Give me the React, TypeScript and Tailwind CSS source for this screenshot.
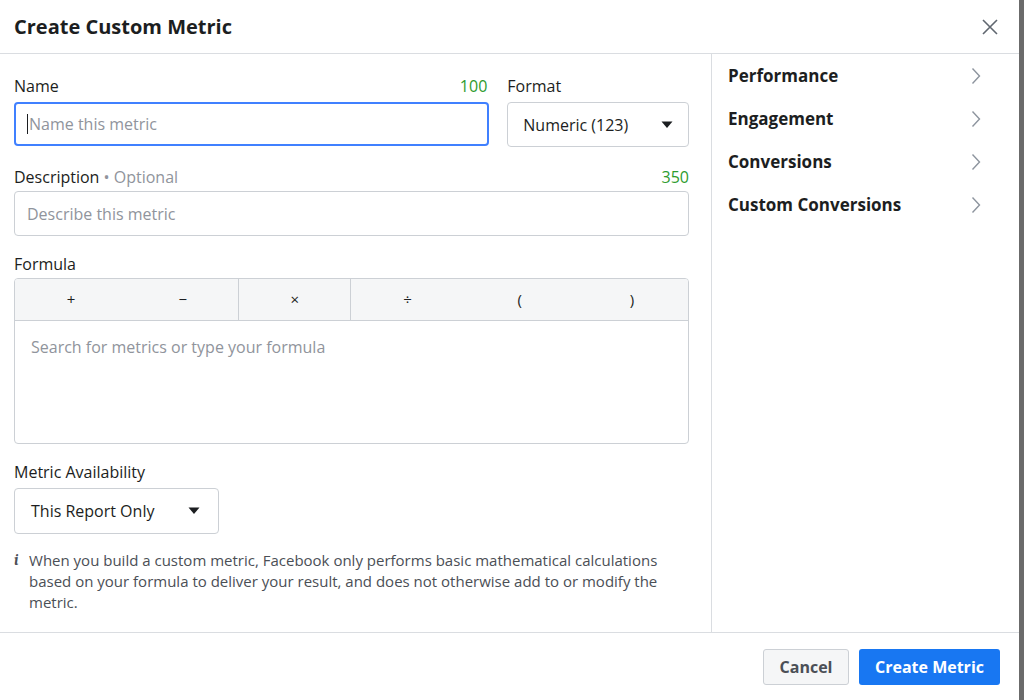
const F = { fontFamily: "'Open Sans', 'Liberation Sans', Arial, sans-serif" };

function Chevron() {
  return (
    <svg width="10" height="18" viewBox="0 0 10 18" fill="none" stroke="#8d949e" strokeWidth="1.4">
      <path d="M1.5 1.5 L8.5 9 L1.5 16.5" />
    </svg>
  );
}

function Caret() {
  return (
    <svg width="12" height="8" viewBox="0 0 12 8">
      <path d="M0.5 0.5 H11.5 L6 7 Z" fill="#1c1e21" />
    </svg>
  );
}

export default function App() {
  const ops = ["+", "−", "×", "÷", "(", ")"];
  return (
    <div className="w-[1024px] h-[700px] bg-[#6b6b6b] flex" style={F}>
      <div className="w-[1019px] h-[700px] bg-white flex flex-col text-[#1c1e21]">
        <div className="h-[54px] border-b border-[#dadde1] flex items-center justify-between pl-[14px] pr-[20px] shrink-0">
          <h1 className="text-[20px] font-bold">Create Custom Metric</h1>
          <svg width="18" height="18" viewBox="0 0 18 18" stroke="#606770" strokeWidth="1.6">
            <path d="M2 2 L16 16 M16 2 L2 16" />
          </svg>
        </div>
        <div className="flex flex-1 min-h-0">
          <div className="w-[712px] border-r border-[#dadde1] pl-[14px] pr-[22px] pt-[20px] text-[16px]">
            <div className="flex gap-[18px]">
              <div className="w-[476px]">
                <div className="flex justify-between h-[28px] items-start">
                  <span>Name</span>
                  <span className="text-[#2e9b2e] pr-[2px]">100</span>
                </div>
                <div className="h-[44px] rounded-[4px] border-2 border-[#4080ff] flex items-center px-[11px] text-[#90949c]">
                  <span className="w-px h-[20px] bg-[#1c1e21] mr-px" />Name this metric
                </div>
              </div>
              <div className="w-[182px]">
                <div className="h-[28px]">Format</div>
                <div className="h-[45px] rounded-[4px] border border-[#ccd0d5] flex items-center justify-between px-[15px]">
                  <span>Numeric (123)</span>
                  <Caret />
                </div>
              </div>
            </div>
            <div className="mt-[18px] flex justify-between h-[26px]">
              <span>Description <span className="text-[#90949c]">• Optional</span></span>
              <span className="text-[#2e9b2e]">350</span>
            </div>
            <div className="h-[45px] rounded-[4px] border border-[#ccd0d5] flex items-center px-[12px] text-[#90949c]">
              Describe this metric
            </div>
            <div className="mt-[16px] h-[26px]">Formula</div>
            <div className="rounded-[4px] border border-[#ccd0d5] overflow-hidden">
              <div className="h-[42px] bg-[#f5f6f7] grid grid-cols-6 border-b border-[#ccd0d5] text-[15px]">
                {ops.map((o, i) => (
                  <div key={o} className={`flex items-center justify-center ${i === 1 || i === 2 ? "border-r border-[#ccd0d5]" : ""}`}>
                    {o}
                  </div>
                ))}
              </div>
              <div className="h-[122px] px-[16px] pt-[14px] text-[#90949c]">Search for metrics or type your formula</div>
            </div>
            <div className="mt-[16px] h-[28px]">Metric Availability</div>
            <div className="w-[205px] h-[46px] rounded-[4px] border border-[#ccd0d5] flex items-center justify-between pl-[16px] pr-[18px]">
              <span>This Report Only</span>
              <Caret />
            </div>
            <div className="mt-[16px] flex gap-[10px] text-[15px] leading-[21px] text-[#4b4f56]">
              <span className="italic font-bold font-serif text-[15px] w-[10px]">i</span>
              <p>When you build a custom metric, Facebook only performs basic mathematical calculations based on your formula to deliver your result, and does not otherwise add to or modify the metric.</p>
            </div>
          </div>
          <div className="flex-1 pl-[16px] pr-[38px] pt-[0px]">
            {["Performance", "Engagement", "Conversions", "Custom Conversions"].map((t) => (
              <div key={t} className="h-[43px] flex items-center justify-between text-[17px] font-bold">
                <span>{t}</span>
                <Chevron />
              </div>
            ))}
          </div>
        </div>
        <div className="h-[68px] border-t border-[#dadde1] flex items-center justify-end gap-[10px] pr-[19px] shrink-0">
          <button className="h-[36px] w-[86px] rounded-[3px] border border-[#ccd0d5] bg-[#f5f6f7] text-[#4b4f56] font-bold text-[16px]">Cancel</button>
          <button className="h-[36px] w-[141px] rounded-[3px] bg-[#1877f2] text-white font-bold text-[16px]">Create Metric</button>
        </div>
      </div>
    </div>
  );
}
